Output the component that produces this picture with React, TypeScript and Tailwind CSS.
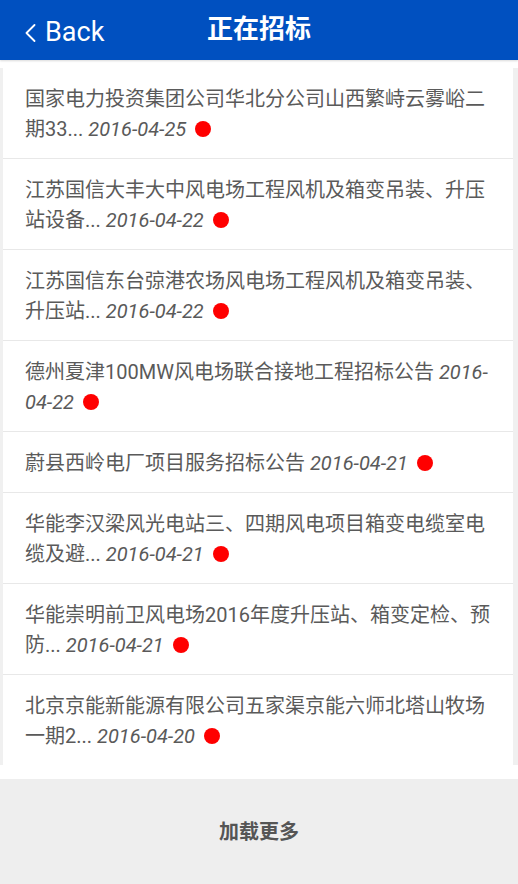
import React from 'react';

interface Tender {
  id: number;
  title: string;
  date: string;
}

const TENDERS: Tender[] = [
  { id: 1, title: '国家电力投资集团公司华北分公司山西繁峙云雾峪二期33...', date: '2016-04-25' },
  { id: 2, title: '江苏国信大丰大中风电场工程风机及箱变吊装、升压站设备...', date: '2016-04-22' },
  { id: 3, title: '江苏国信东台弶港农场风电场工程风机及箱变吊装、升压站...', date: '2016-04-22' },
  { id: 4, title: '德州夏津100MW风电场联合接地工程招标公告', date: '2016-04-22' },
  { id: 5, title: '蔚县西岭电厂项目服务招标公告', date: '2016-04-21' },
  { id: 6, title: '华能李汉梁风光电站三、四期风电项目箱变电缆室电缆及避...', date: '2016-04-21' },
  { id: 7, title: '华能崇明前卫风电场2016年度升压站、箱变定检、预防...', date: '2016-04-21' },
  { id: 8, title: '北京京能新能源有限公司五家渠京能六师北塔山牧场一期2...', date: '2016-04-20' },
];

const App: React.FC = () => {
  return (
    <div className="w-[518px] min-h-[884px] bg-[#eeeeee] font-['Roboto','Noto_Sans_CJK_SC',sans-serif]">
      {/* Header */}
      <header className="relative h-[60px] bg-[#0050c0] flex items-center shadow-[0_1px_2px_rgba(0,0,0,0.15)]">
        <button className="flex items-center gap-[9px] pl-[25px] pt-[5px] text-white">
          <svg width="11" height="18" viewBox="0 0 11 18" fill="none" stroke="currentColor" strokeWidth="1.8" strokeLinecap="round" strokeLinejoin="round">
            <path d="M9.5 1 L1.5 9 L9.5 17" />
          </svg>
          <span className="text-[27px] leading-none">Back</span>
        </button>
        <h1 className="absolute left-1/2 -translate-x-1/2 top-[16px] text-white text-[26px] font-bold leading-none">正在招标</h1>
      </header>

      {/* List */}
      <div className="bg-white pt-[8px] pb-[14px]">
        <ul className="border-l-[3px] border-r-[5px] border-[#f0f0f0] bg-white">
          {TENDERS.map((item, i) => (
            <li
              key={item.id}
              className={`pl-[22px] pr-[20px] pt-[16px] pb-[14px] text-[20px] leading-[30px] text-[#5a5a5a] ${
                i < TENDERS.length - 1 ? 'border-b border-[#e8e8e8]' : ''
              }`}
            >
              {item.title} <span className="italic">{item.date}</span>{' '}
              <span className="inline-block ml-[4px] w-[16px] h-[16px] rounded-full bg-[#ff0000] align-[-1px]" />
            </li>
          ))}
        </ul>
      </div>

      {/* Load more */}
      <div className="h-[106px] flex items-center justify-center">
        <span className="text-[20px] font-bold text-[#555555]">加载更多</span>
      </div>
    </div>
  );
};

export default App;
